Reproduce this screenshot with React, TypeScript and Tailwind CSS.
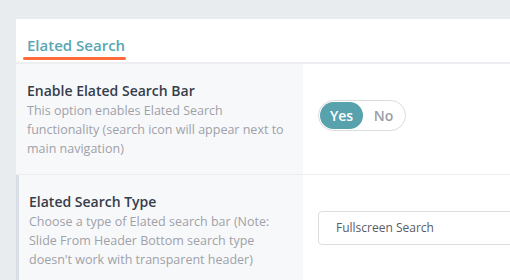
import { useState } from 'react'

interface OptionRowProps {
  title: string
  description: string
  accent?: boolean
  children: React.ReactNode
}

function OptionRow({ title, description, accent, children }: OptionRowProps) {
  return (
    <div className="flex border-b border-[#ebedf0]">
      <div
        className={`w-[287px] shrink-0 bg-[#f7f8fa] pb-[16px] pr-3 pt-[17px] ${
          accent ? 'border-l-[3px] border-[#d9dde5] pl-[10px]' : 'pl-[11px]'
        }`}
      >
        <div className="text-[14px] font-semibold leading-[20px] text-[#363d4a]">{title}</div>
        <div className="text-[12.5px] leading-[19px] text-[#9fa1a9]">{description}</div>
      </div>
      <div className="flex flex-1 items-start pl-[15px] pt-[36px]">{children}</div>
    </div>
  )
}

function YesNoToggle() {
  const [on, setOn] = useState(true)
  return (
    <div className="flex h-[31px] w-[88px] items-center rounded-full border border-[#dcdcdc] bg-white p-px">
      <button
        onClick={() => setOn(true)}
        className={`h-full w-[43px] rounded-full text-[14px] font-semibold ${
          on ? 'bg-[#57a2ad] text-white' : 'text-[#9a9ea6]'
        }`}
      >
        Yes
      </button>
      <button
        onClick={() => setOn(false)}
        className={`h-full flex-1 rounded-full text-[14px] font-semibold ${
          !on ? 'bg-[#57a2ad] text-white' : 'text-[#9a9ea6]'
        }`}
      >
        No
      </button>
    </div>
  )
}

export default function App() {
  return (
    <div className="h-[280px] w-[510px] overflow-hidden bg-[#e9ecef] pl-4 pt-[19px] font-['Open_Sans',sans-serif]">
      <div className="bg-white">
        <div className="h-[45px] border-b-2 border-[#eceef1] pl-[11px] pt-[14px]">
          <div className="inline-block">
            <h2 className="text-[15px] font-semibold leading-[20px] text-[#5aa6b4]">Elated Search</h2>
            <div className="-ml-1 mt-[2px] h-[3px] w-[103px] rounded-full bg-[#ff6b3d]" />
          </div>
        </div>

        <OptionRow
          title="Enable Elated Search Bar"
          description="This option enables Elated Search functionality (search icon will appear next to main navigation)"
        >
          <YesNoToggle />
        </OptionRow>

        <OptionRow
          accent
          title="Elated Search Type"
          description="Choose a type of Elated search bar (Note: Slide From Header Bottom search type doesn't work with transparent header)"
        >
          <div className="flex h-[34px] w-[260px] shrink-0 items-center rounded border border-[#dedede] pl-[17px] text-[12px] text-[#585c66]">
            Fullscreen Search
          </div>
        </OptionRow>
      </div>
    </div>
  )
}
